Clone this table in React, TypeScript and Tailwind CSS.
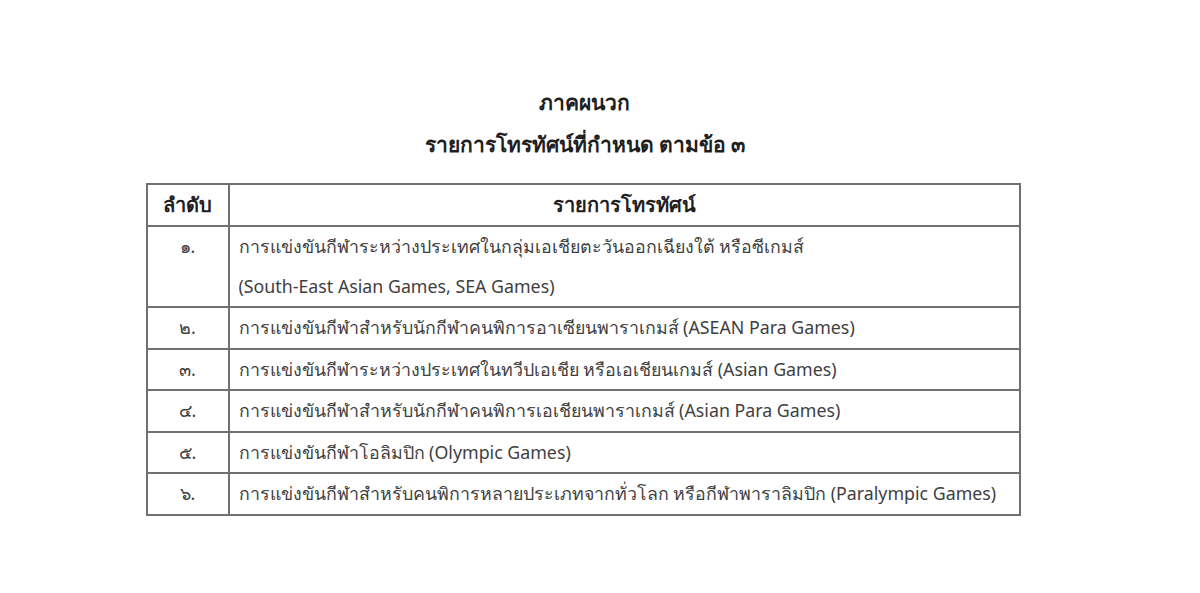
const rows = [
  {
    no: "๑.",
    lines: [
      "การแข่งขันกีฬาระหว่างประเทศในกลุ่มเอเชียตะวันออกเฉียงใต้ หรือซีเกมส์",
      "(South-East Asian Games, SEA Games)",
    ],
  },
  { no: "๒.", lines: ["การแข่งขันกีฬาสำหรับนักกีฬาคนพิการอาเซียนพาราเกมส์ (ASEAN Para Games)"] },
  { no: "๓.", lines: ["การแข่งขันกีฬาระหว่างประเทศในทวีปเอเชีย หรือเอเชียนเกมส์ (Asian Games)"] },
  { no: "๔.", lines: ["การแข่งขันกีฬาสำหรับนักกีฬาคนพิการเอเชียนพาราเกมส์ (Asian Para Games)"] },
  { no: "๕.", lines: ["การแข่งขันกีฬาโอลิมปิก (Olympic Games)"] },
  {
    no: "๖.",
    lines: ["การแข่งขันกีฬาสำหรับคนพิการหลายประเภทจากทั่วโลก หรือกีฬาพาราลิมปิก (Paralympic Games)"],
  },
]

export default function App() {
  return (
    <div
      className="flex h-[593px] w-[1200px] flex-col items-center bg-white pt-[86px] text-[#3f3f3f]"
      style={{ fontFamily: '"Noto Sans", "DejaVu Sans", sans-serif' }}
    >
      {/* Heading */}
      <div className="ml-[-30px] flex flex-col items-center text-[#1f1f1f]">
        <h1 className="text-[21px] font-bold leading-[32px]">ภาคผนวก</h1>
        <h2 className="mt-[10px] text-[21px] font-bold leading-[32px]">
          รายการโทรทัศน์ที่กำหนด ตามข้อ ๓
        </h2>
      </div>

      {/* Table */}
      <table className="ml-[-34px] mt-[23px] w-[875px] border-collapse border-2 border-[#707070] text-[17.8px]">
        <thead>
          <tr className="h-[42px]">
            <th className="w-[82px] border-2 border-[#707070] text-[20px] font-bold text-[#1f1f1f]">
              ลำดับ
            </th>
            <th className="border-2 border-[#707070] text-[20px] font-bold text-[#1f1f1f]">
              รายการโทรทัศน์
            </th>
          </tr>
        </thead>
        <tbody>
          {rows.map((r) => (
            <tr key={r.no}>
              <td className="border-2 border-[#707070] pt-[5px] align-top text-center leading-[29.5px]">
                {r.no}
              </td>
              <td className="border-2 border-[#707070] px-[9px] py-[5px] leading-[29.5px]">
                {r.lines.map((l, i) => (
                  <div key={i} className={i > 0 ? "mt-[10px]" : ""}>
                    {l}
                  </div>
                ))}
              </td>
            </tr>
          ))}
        </tbody>
      </table>
    </div>
  )
}
